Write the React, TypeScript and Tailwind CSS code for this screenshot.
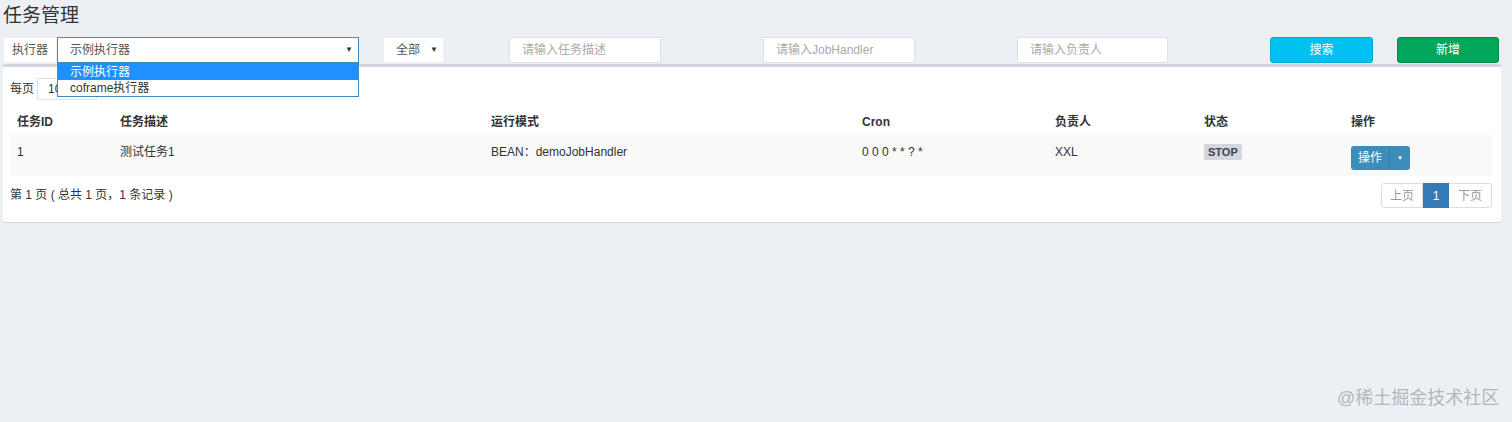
import React from "react";

const font = { fontFamily: '"Liberation Sans", "Noto Sans CJK SC", sans-serif' };

export default function App() {
  const cols = [
    { w: "w-[103px]", h: "任务ID", v: "1" },
    { w: "w-[371px]", h: "任务描述", v: "测试任务1" },
    { w: "w-[371px]", h: "运行模式", v: "BEAN：demoJobHandler" },
    { w: "w-[193px]", h: "Cron", v: "0 0 0 * * ? *" },
    { w: "w-[149px]", h: "负责人", v: "XXL" },
    { w: "w-[147px]", h: "状态", v: "" },
    { w: "flex-1", h: "操作", v: "" },
  ];
  return (
    <div className="w-[1512px] h-[422px] bg-[#ecf0f5] text-[#333] text-[12px] relative overflow-hidden" style={font}>
      <div className="pl-[3px] pt-[4px] h-[37px] text-[19px] leading-[24px] text-[#333]">任务管理</div>
      <div className="flex items-start h-[27px] pl-[3px]">
        <div className="flex h-[26px] w-[356px] relative">
          <div className="w-[54px] bg-white border border-[#eef0f3] flex items-center justify-center text-[12px] text-[#555]">执行器</div>
          <div className="flex-1 bg-white border border-[#3c8dbc] flex items-center justify-between pl-[12px] pr-[5px] text-[12px] text-[#555]">
            <span>示例执行器</span>
            <span className="text-[8px] text-[#333]">▼</span>
          </div>
          <div className="absolute left-[54px] top-[26px] w-[302px] bg-white border border-[#3c8dbc] z-10 text-[12px]">
            <div className="h-[16px] leading-[16px] bg-[#1e90ff] text-white pl-[12px]">示例执行器</div>
            <div className="h-[16px] leading-[16px] text-[#333] pl-[12px]">coframe执行器</div>
          </div>
        </div>
        <div className="ml-[24px] w-[61px] h-[26px] bg-white border border-[#eef0f3] flex items-center justify-between pl-[12px] pr-[5px] text-[#555]">
          <span>全部</span>
          <span className="text-[8px] text-[#333]">▼</span>
        </div>
        <div className="ml-[65px] w-[152px] h-[26px] bg-white border border-[#dde1e6] flex items-center pl-[12px] text-[#aaa]">请输入任务描述</div>
        <div className="ml-[102px] w-[152px] h-[26px] bg-white border border-[#dde1e6] flex items-center pl-[12px] text-[#aaa]">请输入JobHandler</div>
        <div className="ml-[102px] w-[151px] h-[26px] bg-white border border-[#dde1e6] flex items-center pl-[12px] text-[#aaa]">请输入负责人</div>
        <div className="ml-[102px] w-[103px] h-[26px] bg-[#00c0ef] border border-[#00acd6] rounded-[3px] flex items-center justify-center text-white">搜索</div>
        <div className="ml-[24px] w-[102px] h-[26px] bg-[#00a65a] border border-[#008d4c] rounded-[3px] flex items-center justify-center text-white">新增</div>
      </div>
      <div className="ml-[3px] w-[1498px] bg-white border-t-[3px] border-[#d2d6de] rounded-[3px] shadow-[0_1px_1px_rgba(0,0,0,0.1)] h-[158px] pl-[7px] pr-[9px]">
        <div className="flex items-center pt-[9px] h-[34px]">
          <span className="text-[12px]">每页</span>
          <div className="ml-[3px] w-[60px] h-[22px] border border-[#dde1e6] bg-white flex items-center pl-[10px]">10</div>
        </div>
        <div className="mt-[8px]">
          <div className="flex h-[26px] items-center font-bold">
            {cols.map((c, i) => (
              <div key={i} className={`${c.w} pl-[7px]`}>{c.h}</div>
            ))}
          </div>
          <div className="flex h-[41px] bg-[#f9f9f9]">
            {cols.map((c, i) => (
              <div key={i} className={`${c.w} pl-[7px] pt-[8px]`}>
                {i === 5 ? (
                  <span className="inline-block bg-[#d2d6de] text-[#444] font-bold text-[11px] px-[4px] h-[16px] leading-[16px] rounded-[2px]">STOP</span>
                ) : i === 6 ? (
                  <div className="flex h-[24px] mt-[3px] w-[59px] rounded-[3px] overflow-hidden">
                    <div className="w-[38px] bg-[#3c8dbc] text-white flex items-center justify-center">操作</div>
                    <div className="w-[21px] bg-[#3c8dbc] border-l border-[#367fa9] text-white flex items-center justify-center text-[6px]">▼</div>
                  </div>
                ) : (
                  c.v
                )}
              </div>
            ))}
          </div>
        </div>
        <div className="flex items-start justify-between mt-[7px]">
          <div className="pt-[3px]">第 1 页 ( 总共 1 页，1 条记录 )</div>
          <div className="flex h-[25px] text-[12px]">
            <div className="w-[42px] border border-[#ddd] rounded-l-[3px] flex items-center justify-center text-[#999]">上页</div>
            <div className="w-[26px] bg-[#337ab7] border border-[#337ab7] text-white flex items-center justify-center">1</div>
            <div className="w-[43px] border border-[#ddd] border-l-0 rounded-r-[3px] flex items-center justify-center text-[#999]">下页</div>
          </div>
        </div>
      </div>
      <div className="absolute left-[1337px] top-[385px] text-[18px] text-[#b3b6bb]">@稀土掘金技术社区</div>
    </div>
  );
}
